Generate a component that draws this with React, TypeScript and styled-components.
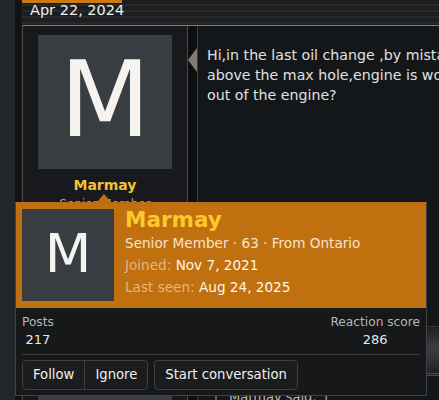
import React from "react";
import styled, { createGlobalStyle } from "styled-components";

const GlobalStyle = createGlobalStyle`
  html, body {
    margin: 0;
    padding: 0;
    background: #16181b;
    overflow: hidden;
  }
  body {
    font-family: "DejaVu Sans", Verdana, sans-serif;
  }
`;

const Page = styled.div`
  position: relative;
  display: flex;
  width: 439px;
  height: 400px;
  overflow: hidden;
  background: #16181b;
`;

const SideRail = styled.div`
  flex: 0 0 22px;
  background: linear-gradient(
    to right,
    #22252a 0 15px,
    #101214 15px 21px,
    #1c1d20 21px
  );
`;

const Thread = styled.div`
  flex: 1;
  display: flex;
  flex-direction: column;
  min-width: 0;
`;

const DateBar = styled.div`
  height: 25px;
  flex: 0 0 25px;
  background: repeating-linear-gradient(
    to bottom,
    #1c1d1f 0 4px,
    #28292b 4px 6px
  );
`;

const DateTab = styled.div`
  width: 92px;
  height: 22px;
  border-top: 3px solid #c97a12;
  padding-left: 8px;
  color: #f1f1f1;
  font-size: 14.5px;
  line-height: 14px;
  white-space: nowrap;
`;

const Post = styled.div`
  flex: 1;
  display: flex;
  border-top: 1px solid #87837c;
  border-left: 1px solid #4a4846;
`;

const UserCell = styled.div`
  flex: 0 0 134px;
  padding: 9px 15px 0;
  background: #17191c;
  border-right: 1px solid #4c4a47;
  display: flex;
  flex-direction: column;
  align-items: center;
`;

const Avatar = styled.div<{ $size: number; $font: number }>`
  flex: 0 0 auto;
  width: ${(p) => p.$size}px;
  height: ${(p) => p.$size}px;
  background: #373d41;
  color: #f6f2ee;
  font-family: "DejaVu Sans", Verdana, sans-serif;
  font-size: ${(p) => p.$font}px;
  line-height: 1;
  display: flex;
  align-items: center;
  justify-content: center;
  padding-bottom: ${(p) => Math.round(p.$size / 45)}px;
  box-sizing: border-box;
`;

const UserName = styled.div`
  margin-top: 8px;
  color: #f2c230;
  font-weight: bold;
  font-size: 14px;
  line-height: 17px;
`;

const UserTitle = styled.div`
  margin-top: 2px;
  color: #a3a3a3;
  font-size: 12px;
  line-height: 16px;
  white-space: nowrap;
`;

const UserExtras = styled.div`
  margin-top: 183px;
  width: 134px;
  height: 40px;
  background: #3a3d41;
`;

const ArrowGap = styled.div`
  flex: 0 0 9px;
  background: #0d0e0f;
  padding-top: 22px;
`;

const Arrow = styled.div`
  width: 0;
  height: 0;
  border-top: 12px solid transparent;
  border-bottom: 12px solid transparent;
  border-right: 9px solid #867b6f;
`;

const MessageCell = styled.div`
  flex: 1;
  min-width: 0;
  background: #141719;
  border-left: 1px solid #403e3b;
  padding: 19px 0 0 9px;
  display: flex;
  flex-direction: column;
`;

const MessageText = styled.div`
  color: #e0e0e0;
  font-size: 14.2px;
  line-height: 20px;
  white-space: nowrap;
`;

const MediaStrip = styled.div`
  margin-top: 221px;
  margin-left: -9px;
  height: 46px;
  border-top: 1px solid #34363a;
  border-bottom: 3px double #4a4c4f;
  background: linear-gradient(
    to bottom,
    #1d1f22 0%,
    #3a3c3f 45%,
    #2c2e31 80%,
    #1d1f22 100%
  );
`;

const QuoteTitle = styled.div`
  margin-top: 12px;
  margin-left: 8px;
  padding-left: 12px;
  border-left: 2px solid #5a5c5f;
  color: #b9b9b9;
  font-size: 13px;
  line-height: 18px;
  white-space: nowrap;
`;

/* member card that pops over the post */

const Card = styled.div`
  position: absolute;
  left: 15px;
  top: 202px;
  width: 410px;
  border: 1px solid #404245;
  border-top-color: #b86c0e;
  background: #16181a;
`;

const CardPointer = styled.div`
  position: absolute;
  left: 81px;
  top: -9px;
  width: 0;
  height: 0;
  border-left: 7px solid transparent;
  border-right: 7px solid transparent;
  border-bottom: 8px solid #c0700f;
`;

const CardHeader = styled.div`
  display: flex;
  gap: 11px;
  padding: 6px 6px 7px;
  background: #c0700f;
`;

const CardInfo = styled.div`
  display: flex;
  flex-direction: column;
`;

const CardName = styled.div`
  color: #fcc82a;
  font-weight: bold;
  font-size: 21.5px;
  line-height: 22px;
  margin-bottom: 1px;
`;

const CardLine = styled.div`
  color: #f6e4d2;
  font-size: 13.6px;
  line-height: 22px;
  white-space: nowrap;
`;

const Muted = styled.span`
  color: #e6b47e;
`;

const Bright = styled.span`
  color: #fff5ea;
`;

const CardBody = styled.div`
  padding: 5px 6px 5px;
`;

const Stats = styled.div`
  display: flex;
  justify-content: space-between;
`;

const Stat = styled.dl`
  margin: 0;
  display: flex;
  flex-direction: column;
  align-items: center;
  line-height: 18px;
`;

const StatLabel = styled.dt`
  color: #b6b6b6;
  font-size: 12.2px;
`;

const StatValue = styled.dd`
  margin: 0;
  color: #e8e8e8;
  font-size: 13px;
`;

const Divider = styled.hr`
  margin: 5px 0 5px;
  border: 0;
  border-top: 1px solid #3a3c3f;
`;

const Actions = styled.div`
  display: flex;
  gap: 6px;
`;

const ButtonGroup = styled.div`
  display: flex;
  border: 1px solid #3e4144;
  border-radius: 4px;
  background: #1a1c1e;
  overflow: hidden;
`;

const Button = styled.button<{ $split?: boolean }>`
  height: 28px;
  padding: 0 10px;
  border: 0;
  border-left: ${(p) => (p.$split ? "1px solid #3e4144" : "0")};
  background: transparent;
  color: #f0f0f0;
  font-family: "DejaVu Sans", Verdana, sans-serif;
  font-size: 13.2px;
  line-height: 28px;
  white-space: nowrap;
  cursor: pointer;
`;

export default function App() {
  return (
    <>
      <GlobalStyle />
      <Page>
        <SideRail />
        <Thread>
          <DateBar>
            <DateTab>Apr 22, 2024</DateTab>
          </DateBar>
          <Post>
            <UserCell>
              <Avatar $size={134} $font={105}>
                M
              </Avatar>
              <UserName>Marmay</UserName>
              <UserTitle>Senior Member</UserTitle>
              <UserExtras />
            </UserCell>
            <ArrowGap>
              <Arrow />
            </ArrowGap>
            <MessageCell>
              <MessageText>
                Hi,in the last oil change ,by mistake I put too much oil
                <br />
                above the max hole,engine is working fine, should I take some
                <br />
                out of the engine?
              </MessageText>
              <MediaStrip />
              <QuoteTitle>Marmay said: ↑</QuoteTitle>
            </MessageCell>
          </Post>
        </Thread>

        <Card>
          <CardPointer />
          <CardHeader>
            <Avatar $size={92} $font={54}>
              M
            </Avatar>
            <CardInfo>
              <CardName>Marmay</CardName>
              <CardLine>Senior Member · 63 · From Ontario</CardLine>
              <CardLine>
                <Muted>Joined:</Muted> <Bright>Nov 7, 2021</Bright>
              </CardLine>
              <CardLine>
                <Muted>Last seen:</Muted> <Bright>Aug 24, 2025</Bright>
              </CardLine>
            </CardInfo>
          </CardHeader>
          <CardBody>
            <Stats>
              <Stat>
                <StatLabel>Posts</StatLabel>
                <StatValue>217</StatValue>
              </Stat>
              <Stat>
                <StatLabel>Reaction score</StatLabel>
                <StatValue>286</StatValue>
              </Stat>
            </Stats>
            <Divider />
            <Actions>
              <ButtonGroup>
                <Button>Follow</Button>
                <Button $split>Ignore</Button>
              </ButtonGroup>
              <ButtonGroup>
                <Button>Start conversation</Button>
              </ButtonGroup>
            </Actions>
          </CardBody>
        </Card>
      </Page>
    </>
  );
}
